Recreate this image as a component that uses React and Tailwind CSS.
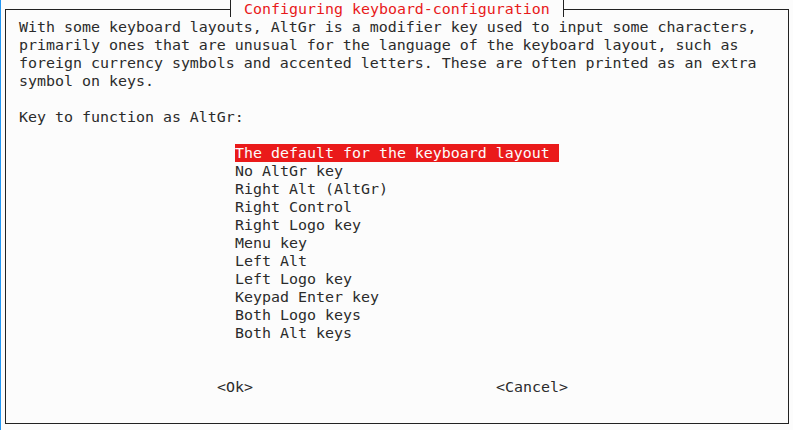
import React from "react";

const items = [
  "The default for the keyboard layout ",
  "No AltGr key",
  "Right Alt (AltGr)",
  "Right Control",
  "Right Logo key",
  "Menu key",
  "Left Alt",
  "Left Logo key",
  "Keypad Enter key",
  "Both Logo keys",
  "Both Alt keys",
];

export default function App() {
  return (
    <div
      className="relative w-[793px] h-[430px] bg-[#fcfcfc] text-[#2b2b2b] overflow-hidden text-[14.95px] leading-[18px]"
      style={{ fontFamily: '"DejaVu Sans Mono", monospace' }}
    >
      <div className="absolute left-0 top-0 w-[1px] h-full bg-[#2196f3]" />
      <div className="ml-[5px] mt-[9px] w-[784px] h-[415px] border border-[#222222] pl-[13px] pt-[8px]">
        <div className="whitespace-pre">
          <div>With some keyboard layouts, AltGr is a modifier key used to input some characters,</div>
          <div>primarily ones that are unusual for the language of the keyboard layout, such as</div>
          <div>foreign currency symbols and accented letters. These are often printed as an extra</div>
          <div>symbol on keys.</div>
          <div className="h-[18px]" />
          <div>Key to function as AltGr:</div>
          <div className="h-[18px]" />
          <div className="ml-[216px] flex flex-col items-start">
            {items.map((t, i) => (
              <div
                key={i}
                className={i === 0 ? "bg-[#ea1a1a] text-[#fcfcfc]" : ""}
              >
                {t}
              </div>
            ))}
          </div>
          <div className="h-[36px]" />
          <div className="flex">
            <div className="ml-[198px]">&lt;Ok&gt;</div>
            <div className="ml-[243px]">&lt;Cancel&gt;</div>
          </div>
        </div>
      </div>
      <div className="absolute left-[230px] top-0 h-[17px] border-l border-r border-[#222222] bg-[#fcfcfc] pl-[13px] pr-[13px] text-[#e8191a] whitespace-pre">
        Configuring keyboard-configuration
      </div>
    </div>
  );
}
